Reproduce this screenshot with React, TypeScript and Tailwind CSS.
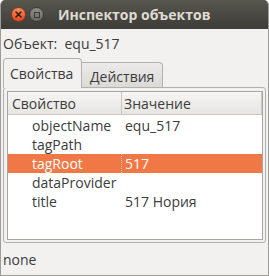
const rows = [
  { name: "objectName", value: "equ_517" },
  { name: "tagPath", value: "" },
  { name: "tagRoot", value: "517" },
  { name: "dataProvider", value: "" },
  { name: "title", value: "517 Нория" },
];

const font = { fontFamily: '"Open Sans", "Noto Sans", sans-serif' };

export default function App() {
  const selected = 2;
  return (
    <div className="w-[269px] h-[276px] bg-white" style={font}>
      <div className="flex flex-col w-full h-full rounded-t-[5px] overflow-hidden bg-[#f2f1f0] border-x border-b border-[#9e9c97] text-[14px] text-[#3c3c3c]">
        {/* title bar */}
        <div className="relative h-[29px] shrink-0 -mx-px bg-gradient-to-b from-[#57564f] to-[#3c3b37] flex items-center">
          <div className="ml-[11px] w-[15px] h-[15px] rounded-full bg-gradient-to-b from-[#f58c64] to-[#df4a19] border border-[#8f3516] flex items-center justify-center">
            <svg width="7" height="7" viewBox="0 0 7 7">
              <path d="M1 1 L6 6 M6 1 L1 6" stroke="#3a1a0c" strokeWidth="1.6" strokeLinecap="round" />
            </svg>
          </div>
          <div className="ml-[3px] w-[15px] h-[15px] rounded-full bg-gradient-to-b from-[#8e8c86] to-[#6b6964] border border-[#3a3935] flex items-center justify-center">
            <div className="w-[6px] h-[6px] border-[1.5px] border-[#3b3a36]" />
          </div>
          <div className="ml-[14px] font-bold text-[#dfdbd2] text-[14px] leading-none">Инспектор объектов</div>
        </div>

        {/* object line */}
        <div className="h-[28px] shrink-0 flex items-center pl-[2px] whitespace-pre">
          Объект:  equ_517
        </div>

        {/* tabs */}
        <div className="mt-[1px] flex items-end pl-[2px] h-[30px] shrink-0 relative z-10">
          <div className="h-[30px] w-[79px] border border-b-0 border-[#b3b1ab] rounded-t-[4px] bg-[#f2f1f0] flex items-center pl-[6px]">
            Свойства
          </div>
          <div className="h-[26px] w-[81px] border border-l-0 border-[#b3b1ab] rounded-tr-[4px] bg-gradient-to-b from-[#ecebe9] to-[#dcdad6] flex items-center pl-[8px] pt-[2px]">
            Действия
          </div>
        </div>

        {/* panel */}
        <div className="-mt-px ml-[2px] w-[263px] h-[156px] shrink-0 border border-[#b3b1ab] rounded-[3px] pl-[3px] pr-[2px] pt-[3px] pb-[2px]">
          <div className="w-full h-full border border-[#a8a6a1] bg-white">
            <div className="h-[23px] flex border-b border-[#c9c7c2] bg-gradient-to-b from-[#f7f6f5] to-[#e6e5e2]">
              <div className="w-[114px] border-r border-[#c9c7c2] flex items-center pl-[4px]">Свойство</div>
              <div className="flex-1 flex items-center pl-[2px] border-r border-[#c9c7c2]">Значение</div>
            </div>
            <div className="pt-px">
              {rows.map((r, i) => (
                <div
                  key={r.name}
                  className={
                    i === selected
                      ? "h-[19px] flex items-center bg-[#f07746] text-white"
                      : "h-[19px] flex items-center"
                  }
                >
                  <div
                    className={
                      i === selected
                        ? "w-[114px] pl-[24px] border-r border-dotted border-[#f8c3ad] h-full flex items-center"
                        : "w-[114px] pl-[24px] h-full flex items-center"
                    }
                  >
                    {r.name}
                  </div>
                  <div className="flex-1 pl-[3px]">{r.value}</div>
                </div>
              ))}
            </div>
          </div>
        </div>

        {/* status */}
        <div className="flex-1 flex items-center pl-[2px]">none</div>
      </div>
    </div>
  );
}
